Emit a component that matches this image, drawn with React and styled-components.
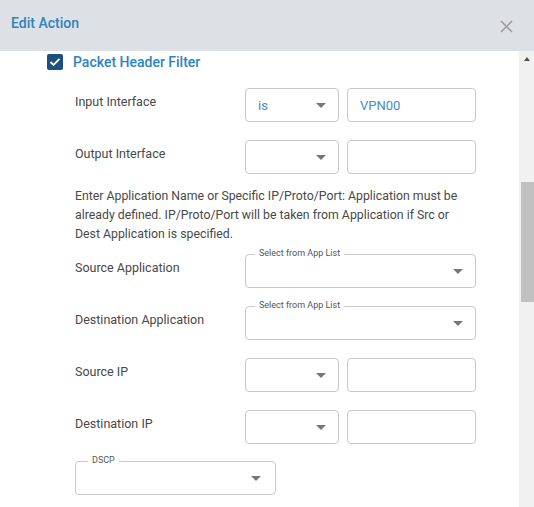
import React from 'react'
import styled, { createGlobalStyle } from 'styled-components'

const Global = createGlobalStyle`
  html, body {
    margin: 0;
    padding: 0;
    background: #fff;
    overflow: hidden;
  }
  * { box-sizing: border-box; }
`

const Modal = styled.div`
  width: 534px;
  height: 507px;
  overflow: hidden;
  display: flex;
  flex-direction: column;
  font-family: Roboto, "Liberation Sans", Arial, sans-serif;
  background: #fff;
`

const Header = styled.div`
  height: 51px;
  flex-shrink: 0;
  background: #dde1e5;
  display: flex;
  justify-content: space-between;
  align-items: flex-start;
  padding: 13px 21px 0 11px;
`

const Title = styled.div`
  font-size: 14px;
  line-height: 20px;
  font-weight: 500;
  color: #2b84bf;
`

const CloseButton = styled.button`
  border: 0;
  background: none;
  padding: 0;
  margin-top: 7px;
  width: 13px;
  height: 13px;
  display: flex;
  cursor: pointer;
`

const Body = styled.div`
  flex: 1;
  display: flex;
  align-items: flex-start;
`

const Content = styled.div`
  flex: 1;
  padding-top: 2px;
`

const FilterRow = styled.label`
  display: flex;
  align-items: center;
  gap: 10px;
  margin-left: 47px;
  height: 17px;
`

const Checkbox = styled.span`
  width: 16px;
  height: 16px;
  border-radius: 2px;
  background: #1c5080;
  display: flex;
  align-items: center;
  justify-content: center;
`

const FilterTitle = styled.span`
  font-size: 14px;
  font-weight: 500;
  color: #2b84bf;
`

const Fields = styled.div`
  padding-left: 75px;
  display: flex;
  flex-direction: column;
`

const Row = styled.div`
  display: flex;
  gap: 8px;
  align-items: flex-start;
  margin-top: ${p => p.$top ?? 18}px;
`

const Label = styled.div`
  width: 162px;
  flex-shrink: 0;
  font-size: 12.5px;
  line-height: 19px;
  color: #484848;
  padding-top: 4px;
`

const Note = styled.p`
  margin: 13px 0 0;
  width: 420px;
  font-size: 12.3px;
  line-height: 19px;
  color: #484848;
`

const Box = styled.div`
  position: relative;
  flex-shrink: 0;
  width: ${p => p.$width}px;
  height: 34px;
  border: 1px solid #c8c8c8;
  border-radius: 4px;
  display: flex;
  align-items: center;
  padding: 0 12px;
  font-size: 13px;
  color: #3d8fc4;
`

const Value = styled.span`
  flex: 1;
`

const Arrow = styled.span`
  width: 0;
  height: 0;
  border-left: 5px solid transparent;
  border-right: 5px solid transparent;
  border-top: 5px solid #777;
  margin-right: ${p => p.$right ?? 0}px;
`

const Legend = styled.span`
  position: absolute;
  top: -7px;
  left: ${p => p.$left}px;
  padding: 0 4px;
  background: #fff;
  font-size: 9px;
  line-height: 11px;
  color: #555;
`

const Scrollbar = styled.div`
  width: 15px;
  height: 465px;
  flex-shrink: 0;
  background: #f1f1f1;
  display: flex;
  flex-direction: column;
  align-items: center;
`

const ScrollButton = styled.div`
  height: 15px;
  width: 15px;
  display: flex;
  align-items: center;
  justify-content: center;
`

const UpTri = styled.span`
  width: 0;
  height: 0;
  border-left: 3.5px solid transparent;
  border-right: 3.5px solid transparent;
  border-bottom: 4px solid #505050;
`

const DownTri = styled.span`
  width: 0;
  height: 0;
  border-left: 3.5px solid transparent;
  border-right: 3.5px solid transparent;
  border-top: 4px solid #505050;
`

const Track = styled.div`
  flex: 1;
  width: 15px;
  padding-left: 2px;
`

const Thumb = styled.div`
  margin-top: 116px;
  height: 120px;
  width: 13px;
  background: #c1c1c1;
`

const Select = ({ value, width = 94, legend, legendLeft, arrowRight }) => (
  <Box $width={width}>
    {legend && <Legend $left={legendLeft}>{legend}</Legend>}
    <Value>{value}</Value>
    <Arrow $right={arrowRight} />
  </Box>
)

const TextBox = ({ value }) => (
  <Box $width={129}>
    <Value>{value}</Value>
  </Box>
)

export default function App() {
  return (
    <Modal>
      <Global />
      <Header>
        <Title>Edit Action</Title>
        <CloseButton aria-label="close">
          <svg width="13" height="13" viewBox="0 0 13 13">
            <path d="M1 1 L12 12 M12 1 L1 12" stroke="#9a9a9a" strokeWidth="1.5" />
          </svg>
        </CloseButton>
      </Header>
      <Body>
        <Content>
          <FilterRow>
            <Checkbox>
              <svg width="12" height="10" viewBox="0 0 12 10">
                <path d="M1.5 5 L4.5 8 L10.5 1.8" stroke="#fff" strokeWidth="1.8" fill="none" />
              </svg>
            </Checkbox>
            <FilterTitle>Packet Header Filter</FilterTitle>
          </FilterRow>
          <Fields>
            <Row>
              <Label>Input Interface</Label>
              <Select value="is" />
              <TextBox value="VPN00" />
            </Row>
            <Row>
              <Label>Output Interface</Label>
              <Select />
              <TextBox />
            </Row>
            <Note>
              Enter Application Name or Specific IP/Proto/Port: Application must be<br />
              already defined. IP/Proto/Port will be taken from Application if Src or<br />
              Dest Application is specified.
            </Note>
            <Row $top={10}>
              <Label>Source Application</Label>
              <Select width={231} legend="Select from App List" legendLeft={9} />
            </Row>
            <Row>
              <Label>Destination Application</Label>
              <Select width={231} legend="Select from App List" legendLeft={9} />
            </Row>
            <Row>
              <Label>Source IP</Label>
              <Select />
              <TextBox />
            </Row>
            <Row>
              <Label>Destination IP</Label>
              <Select />
              <TextBox />
            </Row>
            <Row $top={17}>
              <Select width={201} legend="DSCP" legendLeft={12} arrowRight={2} />
            </Row>
          </Fields>
        </Content>
        <Scrollbar>
          <ScrollButton><UpTri /></ScrollButton>
          <Track><Thumb /></Track>
          <ScrollButton><DownTri /></ScrollButton>
        </Scrollbar>
      </Body>
    </Modal>
  )
}
